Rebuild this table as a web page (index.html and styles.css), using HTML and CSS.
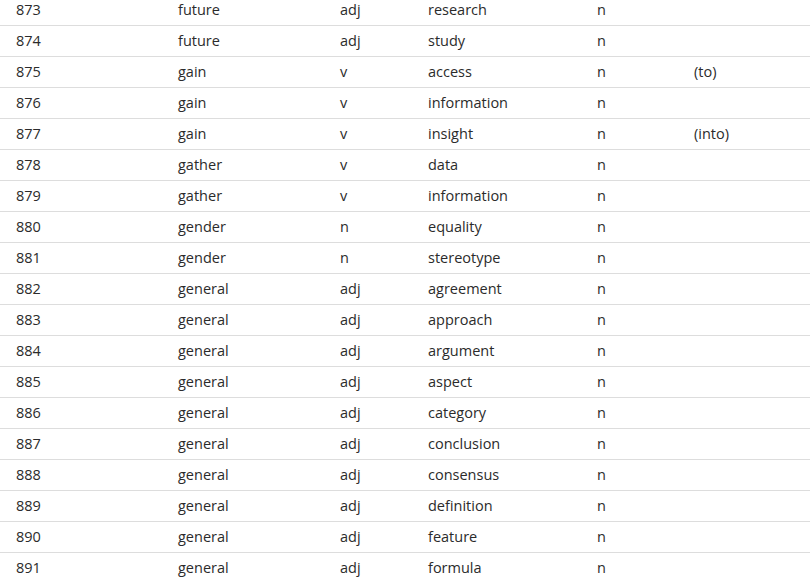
FILE: index.html
```html
<!DOCTYPE html>
<html>
<head>
<meta charset="utf-8">
<link rel="stylesheet" href="styles.css">
</head>
<body>
<div class="table">
  <div class="row"><span>873</span><span>future</span><span>adj</span><span>research</span><span>n</span><span></span></div>
  <div class="row"><span>874</span><span>future</span><span>adj</span><span>study</span><span>n</span><span></span></div>
  <div class="row"><span>875</span><span>gain</span><span>v</span><span>access</span><span>n</span><span>(to)</span></div>
  <div class="row"><span>876</span><span>gain</span><span>v</span><span>information</span><span>n</span><span></span></div>
  <div class="row"><span>877</span><span>gain</span><span>v</span><span>insight</span><span>n</span><span>(into)</span></div>
  <div class="row"><span>878</span><span>gather</span><span>v</span><span>data</span><span>n</span><span></span></div>
  <div class="row"><span>879</span><span>gather</span><span>v</span><span>information</span><span>n</span><span></span></div>
  <div class="row"><span>880</span><span>gender</span><span>n</span><span>equality</span><span>n</span><span></span></div>
  <div class="row"><span>881</span><span>gender</span><span>n</span><span>stereotype</span><span>n</span><span></span></div>
  <div class="row"><span>882</span><span>general</span><span>adj</span><span>agreement</span><span>n</span><span></span></div>
  <div class="row"><span>883</span><span>general</span><span>adj</span><span>approach</span><span>n</span><span></span></div>
  <div class="row"><span>884</span><span>general</span><span>adj</span><span>argument</span><span>n</span><span></span></div>
  <div class="row"><span>885</span><span>general</span><span>adj</span><span>aspect</span><span>n</span><span></span></div>
  <div class="row"><span>886</span><span>general</span><span>adj</span><span>category</span><span>n</span><span></span></div>
  <div class="row"><span>887</span><span>general</span><span>adj</span><span>conclusion</span><span>n</span><span></span></div>
  <div class="row"><span>888</span><span>general</span><span>adj</span><span>consensus</span><span>n</span><span></span></div>
  <div class="row"><span>889</span><span>general</span><span>adj</span><span>definition</span><span>n</span><span></span></div>
  <div class="row"><span>890</span><span>general</span><span>adj</span><span>feature</span><span>n</span><span></span></div>
  <div class="row"><span>891</span><span>general</span><span>adj</span><span>formula</span><span>n</span><span></span></div>
</div>
</body>
</html>
```
FILE: styles.css
```css
html, body {
  margin: 0;
  padding: 0;
  background: #fff;
  overflow: hidden;
}
.table {
  margin-top: -5px;
  font-family: "Open Sans", "Noto Sans", sans-serif;
  font-size: 14.5px;
  color: #2b2b2b;
}
.row {
  display: grid;
  grid-template-columns: 162px 162px 88px 169px 97px 1fr;
  height: 30px;
  align-items: center;
  border-bottom: 1px solid #dddddd;
}
.row span {
  padding-left: 16px;
  padding-bottom: 2px;
  white-space: nowrap;
}
```
